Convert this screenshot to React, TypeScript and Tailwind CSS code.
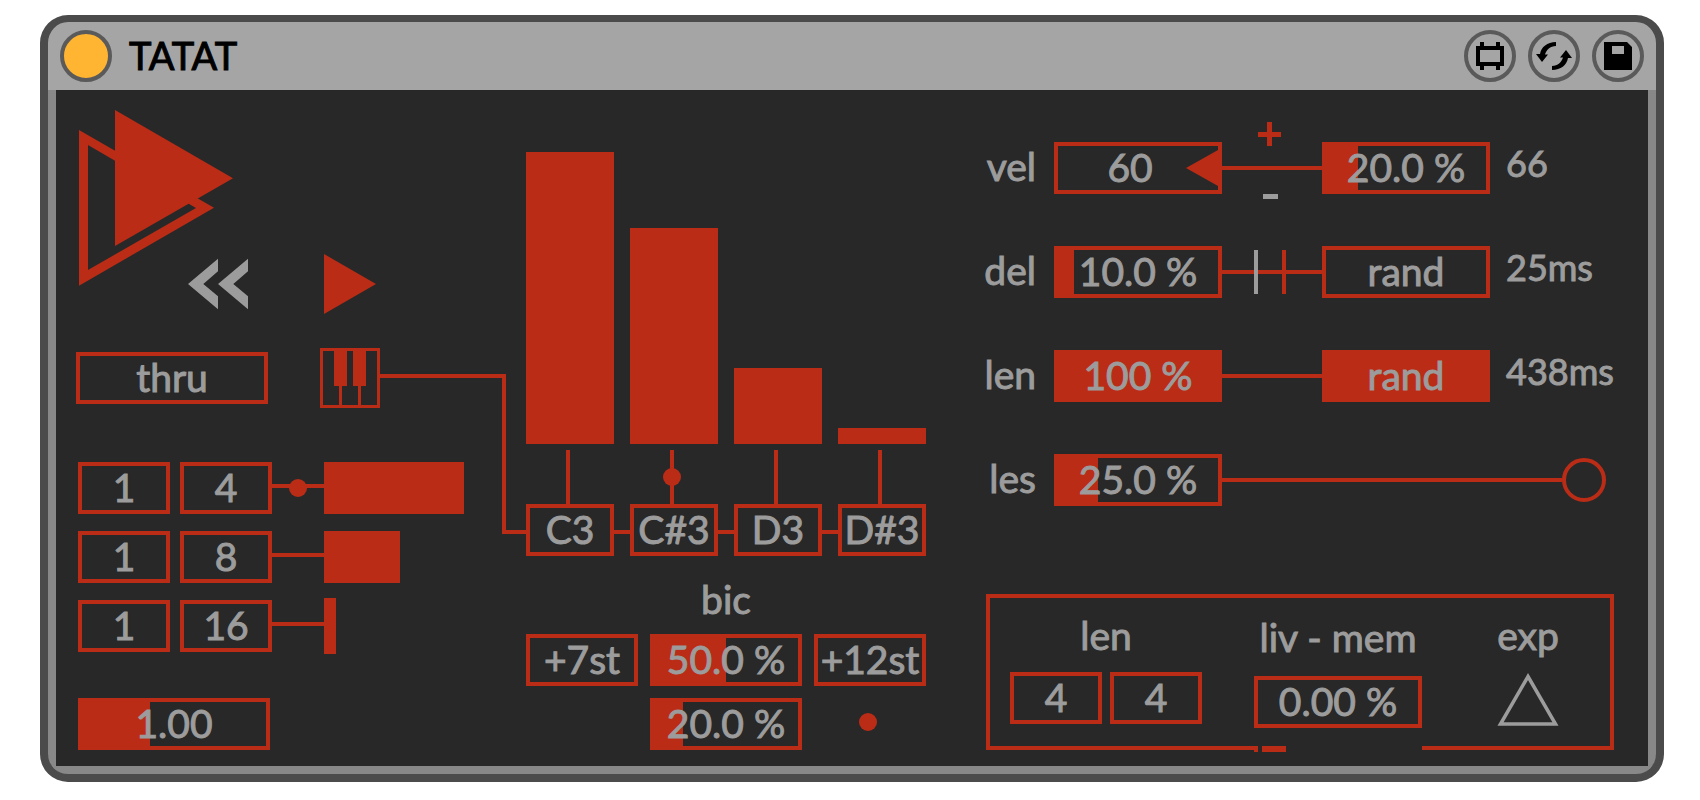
import type { ReactNode } from "react";

const RED = "#bb2c16";
const GREY = "#9c9c9c";

type FieldProps = {
  label: string;
  value: string;
  width: string;
  fill?: number;
  pad?: string;
};

/* Value box; `fill` is the share (0-100) of the inner width that is lit. */
function Field({ label, value, width, fill = 0, pad = "px-0" }: FieldProps) {
  return (
    <div className={`relative h-[52px] shrink-0 border-4 border-[#bb2c16] ${width}`}>
      <div className="absolute inset-y-0 left-0 bg-[#bb2c16]" style={{ width: `${fill}%` }} />
      <input
        type="text"
        aria-label={label}
        defaultValue={value}
        className={`relative block h-full w-full bg-transparent pb-[2px] text-center outline-none ${pad}`}
      />
    </div>
  );
}

function Toggle({ children, width, on = false }: { children: ReactNode; width: string; on?: boolean }) {
  return (
    <button
      type="button"
      aria-pressed={on}
      className={`flex h-[52px] shrink-0 items-center justify-center border-4 border-[#bb2c16] pb-[2px] ${width} ${on ? "bg-[#bb2c16]" : ""}`}
    >
      {children}
    </button>
  );
}

function Dot() {
  return <div className="size-[18px] rounded-full bg-[#bb2c16]" />;
}

function RateRow({ num, den, bar, dot = false }: { num: string; den: string; bar: string; dot?: boolean }) {
  return (
    <div className="flex h-[52px] items-center">
      <Field label={`Rate 1/${den} numerator`} value={num} width="w-[92px]" />
      <div className="w-[10px]" />
      <Field label={`Rate 1/${den} denominator`} value={den} width="w-[92px]" />
      <div className="relative flex h-full w-[52px] items-center">
        <div className="mb-1 h-1 w-full bg-[#bb2c16]" />
        {dot && (
          <div className="absolute inset-0 flex items-center justify-center">
            <Dot />
          </div>
        )}
      </div>
      <div className={`bg-[#bb2c16] ${bar}`} />
    </div>
  );
}

function Logo() {
  return (
    <svg width="154" height="176" viewBox="0 0 154 176" aria-hidden="true">
      <path fill={RED} fillRule="evenodd" d="M0 20L135 97.700L0 175.700ZM9 35V160L117 98Z" />
      <path fill={RED} d="M36 0L154 68.300L36 136Z" />
    </svg>
  );
}

function LeftColumn() {
  return (
    <section className="flex w-[450px] shrink-0 flex-col items-start pt-5">
      <button type="button" aria-label="Run" className="ml-[3px]">
        <Logo />
      </button>
      <div className="-mt-8 flex items-center gap-[76px] pl-28">
        <button type="button" aria-label="Rewind">
          <svg width="60" height="60" viewBox="0 0 60 60" fill={GREY} aria-hidden="true">
            <path d="M0 30L30 4.700V17.300L15.300 30L30 42.300V55.300Z" />
            <path d="M30 30L60 4.700V17.300L45.300 30L60 42.300V55.300Z" />
          </svg>
        </button>
        <button type="button" aria-label="Play">
          <svg width="52" height="60" viewBox="0 0 52 60" aria-hidden="true">
            <path fill={RED} d="M0 0L52 30L0 60Z" />
          </svg>
        </button>
      </div>

      <div className="mt-[34px] flex items-center gap-[52px]">
        <Toggle width="w-[192px]">thru</Toggle>
        <div className="relative">
          <button type="button" aria-label="Keyboard input" className="block">
            <svg width="60" height="60" viewBox="0 0 60 60" aria-hidden="true">
              <rect x="1.500" y="1.500" width="57" height="57" fill="none" stroke={RED} strokeWidth="3" />
              <path fill={RED} d="M14 2H27V38H22V58H19V38H14ZM33 2H46V38H41V58H38V38H33Z" />
            </svg>
          </button>
          <svg
            width="146"
            height="160"
            viewBox="0 0 146 160"
            className="pointer-events-none absolute top-[26px] left-full max-w-none"
            aria-hidden="true"
          >
            <path d="M0 2H124V158H146" fill="none" stroke={RED} strokeWidth="4" />
          </svg>
        </div>
      </div>

      <div className="mt-[54px] ml-[2px] flex flex-col gap-[17px]">
        <RateRow num="1" den="4" bar="h-[52px] w-[140px]" dot />
        <RateRow num="1" den="8" bar="h-[52px] w-[76px]" />
        <RateRow num="1" den="16" bar="h-14 w-3" />
      </div>

      <div className="mt-[46px] ml-[2px]">
        <Field label="Speed" value="1.00" width="w-[192px]" fill={37} />
      </div>
    </section>
  );
}

const notes = [
  { name: "C3", level: 292, dot: false },
  { name: "C#3", level: 216, dot: true },
  { name: "D3", level: 76, dot: false },
  { name: "D#3", level: 16, dot: false },
];

function MiddleColumn() {
  return (
    <section className="w-[400px] shrink-0 pt-[62px]">
      <div className="flex h-[292px] items-end gap-4">
        {notes.map((n) => (
          <div key={n.name} className="flex-1 bg-[#bb2c16]" style={{ height: n.level }} />
        ))}
      </div>
      <div className="mt-[6px] flex gap-4">
        {notes.map((n) => (
          <div key={n.name} className="flex h-[54px] flex-1 justify-center pr-1">
            <div className="relative w-1 bg-[#bb2c16]">
              {n.dot && (
                <div className="absolute top-1/2 left-1/2 -translate-x-1/2 -translate-y-1/2">
                  <Dot />
                </div>
              )}
            </div>
          </div>
        ))}
      </div>
      <div className="flex items-center">
        {notes.map((n, i) => (
          <div key={n.name} className="flex items-center">
            {i > 0 && <div className="mt-1 h-1 w-4 bg-[#bb2c16]" />}
            <Field label={`Note ${i + 1}`} value={n.name} width="w-[88px]" />
          </div>
        ))}
      </div>

      <h2 className="mt-[19px] flex h-[52px] items-center justify-center pb-1">bic</h2>
      <div className="mt-[7px] grid grid-cols-[112px_152px_112px] items-center gap-3">
        <Field label="First interval" value="+7st" width="w-full" />
        <Field label="First interval chance" value="50.0 %" width="w-full" fill={50} />
        <Field label="Second interval" value="+12st" width="w-full" />
        <div />
        <Field label="Second interval chance" value="20.0 %" width="w-full" fill={20} />
        <div className="flex justify-center pr-1 pb-1">
          <Dot />
        </div>
      </div>
    </section>
  );
}

function Row({ label, children }: { label: string; children: ReactNode }) {
  return (
    <div className="flex h-[52px] items-center">
      <h3 className="flex w-[50px] shrink-0 justify-end pb-1">{label}</h3>
      <div className="w-[18px] shrink-0" />
      {children}
    </div>
  );
}

function Wire({ children }: { children?: ReactNode }) {
  return (
    <div className="relative flex h-full flex-1 items-center">
      <div className="h-1 w-full bg-[#bb2c16]" />
      {children}
    </div>
  );
}

function Reading({ children }: { children: ReactNode }) {
  return <output className="ml-4 w-[108px] shrink-0 pb-[10px] text-[36px] whitespace-nowrap">{children}</output>;
}

function RightColumn() {
  return (
    <section className="ml-[60px] flex min-w-0 flex-1 flex-col pt-[52px]">
      <div className="flex flex-col gap-[52px]">
        <Row label="vel">
          <div className="relative">
            <Field label="Velocity" value="60" width="w-[168px]" pad="pr-4" />
            <svg width="36" height="36" viewBox="0 0 36 36" className="absolute top-2 right-0" aria-hidden="true">
              <path fill={RED} d="M0 18L32 0V36Z" />
            </svg>
          </div>
          <Wire>
            <div className="absolute inset-x-0 -top-5 flex justify-center pr-1">
              <button type="button" aria-label="Velocity up">
                <svg width="24" height="24" viewBox="0 0 24 24" aria-hidden="true">
                  <path d="M9 0H14V10H23V15H14V24H9V15H0V10H9Z" fill={RED} />
                </svg>
              </button>
            </div>
            <div className="absolute inset-x-0 -bottom-4 flex justify-center pr-1">
              <button type="button" aria-label="Velocity down">
                <svg width="24" height="24" viewBox="0 0 24 24" aria-hidden="true">
                  <path d="M5 8H20V13H5Z" fill={GREY} />
                </svg>
              </button>
            </div>
          </Wire>
          <Field label="Velocity random" value="20.0 %" width="w-[168px]" fill={20} />
          <Reading>66</Reading>
        </Row>
        <Row label="del">
          <Field label="Delay" value="10.0 %" width="w-[168px]" fill={10} />
          <Wire>
            <div className="absolute inset-0 flex items-center justify-center gap-6 pr-1">
              <div className="h-11 w-1 bg-[#9c9c9c]" />
              <div className="h-11 w-1 bg-[#bb2c16]" />
            </div>
          </Wire>
          <Toggle width="w-[168px]">rand</Toggle>
          <Reading>25ms</Reading>
        </Row>
        <Row label="len">
          <Field label="Length" value="100 %" width="w-[168px]" fill={100} />
          <Wire />
          <Toggle width="w-[168px]" on>
            rand
          </Toggle>
          <Reading>438ms</Reading>
        </Row>
        <Row label="les">
          <Field label="Less" value="25.0 %" width="w-[168px]" fill={25} />
          <Wire />
          <button
            type="button"
            aria-label="Less trigger"
            className="mr-2 size-11 shrink-0 rounded-full border-4 border-[#bb2c16]"
          />
        </Row>
      </div>

      <div className="mt-[88px] flex h-[156px] items-start border-4 border-[#bb2c16] pt-[13px] pr-[51px] pl-5">
        <div className="flex flex-col items-center">
          <h3 className="flex h-[52px] items-center pb-1">len</h3>
          <div className="mt-[9px] flex gap-2">
            <Field label="Length numerator" value="4" width="w-[92px]" />
            <Field label="Length denominator" value="4" width="w-[92px]" />
          </div>
        </div>
        <div className="relative mt-[2px] ml-[52px] flex flex-col items-center">
          <h3 className="flex h-[52px] items-center pb-1 whitespace-nowrap">liv - mem</h3>
          <div className="mt-[11px]">
            <Field label="Live to memory" value="0.00 %" width="w-[168px]" />
          </div>
          <div className="absolute top-full left-0 mt-[18px] flex h-[6px] w-full gap-1 bg-[#282828]">
            <div className="w-1 bg-[#bb2c16]" />
            <div className="w-6 bg-[#bb2c16]" />
          </div>
        </div>
        <div className="ml-auto flex flex-col items-center">
          <h3 className="flex h-[52px] items-center pb-1">exp</h3>
          <button type="button" aria-label="Export" className="mt-[10px]">
            <svg width="62" height="54" viewBox="0 0 62 54" aria-hidden="true">
              <path d="M31 3.500L58.500 51H3.500Z" fill="none" stroke={GREY} strokeWidth="3.500" />
            </svg>
          </button>
        </div>
      </div>
    </section>
  );
}

function HeaderButton({ label, children }: { label: string; children: ReactNode }) {
  return (
    <button
      type="button"
      aria-label={label}
      className="flex size-[52px] items-center justify-center rounded-full border-4 border-[#5a5a5a]"
    >
      <svg width="36" height="36" viewBox="0 0 36 36" aria-hidden="true">
        {children}
      </svg>
    </button>
  );
}

export default function App() {
  return (
    <main className="min-h-screen bg-white py-[15px] pr-[36px] pl-[40px] font-['Lato','Liberation_Sans',sans-serif] text-[39px] leading-none text-[#9c9c9c] [-webkit-text-stroke:1px_currentColor]">
      <div className="min-w-[1560px] overflow-hidden rounded-[28px] border-8 border-t-[7px] border-[#4b4b4b] bg-[#a5a5a5]">
        <header className="flex h-[68px] items-center px-3">
          <button
            type="button"
            aria-label="Device on"
            className="size-[52px] rounded-full border-4 border-[#5a5a5a] bg-[#ffb432]"
          />
          <h1 className="ml-[17px] flex-1 pb-[2px] text-[38px] text-black">TATAT</h1>
          <div className="flex gap-3">
            <HeaderButton label="Toggle window">
              <path
                fillRule="evenodd"
                d="M8 4H12V8H24V4H28V8H32V28H28V32H24V28H12V32H8V28H4V8H8ZM8 12V24H28V12Z"
              />
            </HeaderButton>
            <HeaderButton label="Hot-swap">
              <path d="M20 4C11 4.500 5.500 8.500 4 16H0L6 24L12 16.500H9C10.500 11.500 14 8.500 20 8Z" />
              <path d="M16 32C25 31.500 30.500 27.500 32 20H36L30 12L24 19.500H27C25.500 24.500 22 27.500 16 28Z" />
            </HeaderButton>
            <HeaderButton label="Save">
              <path fillRule="evenodd" d="M4 4H27L32 9V32H4ZM12 8V16H24V8Z" />
            </HeaderButton>
          </div>
        </header>
        <div className="flex border-x-8 border-b-8 border-[#888888] bg-[#282828] pr-[34px] pb-4 pl-5">
          <LeftColumn />
          <MiddleColumn />
          <RightColumn />
        </div>
      </div>
    </main>
  );
}
